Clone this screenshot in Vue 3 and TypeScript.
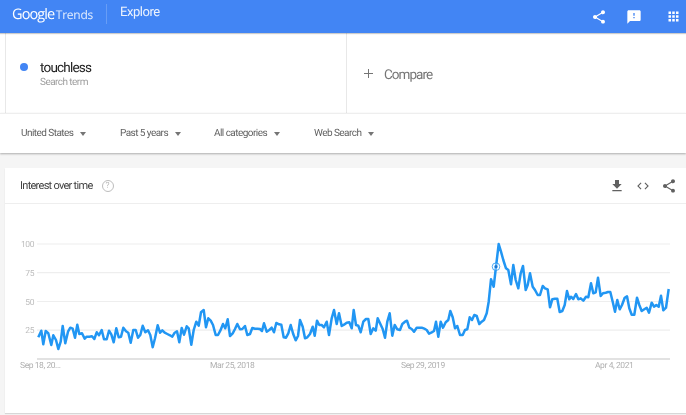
<script setup lang="ts">
import { computed } from 'vue'

const filters = ['United States', 'Past 5 years', 'All categories', 'Web Search']

// weekly samples, read off in three runs: [origin x, origin y, x/y pairs at 3x]
const runs: [number, number, number[]][] = [
  [0, 160, [115,532,124,512,130,553,137,513,145,520,154,555,160,526,168,540,175,567,182,545,188,498,196,550,204,515,211,503,218,506,225,533,232,494,238,522,246,520,254,536,260,530,268,530,276,529,283,537,290,517,297,526,305,510,312,538,320,538,327,512,334,523,341,547,349,505,356,532,363,530,370,503,378,514,385,518,392,548,400,510,407,510,414,533,421,525,428,497,436,517,444,511,451,525,458,562,465,535,473,496,480,518,487,511,494,518,502,522,510,526,517,530,524,518,531,514,538,547,545,504,552,524,560,499,566,505,574,554,581,510,589,485,596,497,603,457,611,450,618,502,625,475,632,482,639,495,647,525,654,525,661,512,669,492,676,505,683,478]],
  [230, 230, [0,318,8,310,15,297,22,282,30,298,37,297,45,288,52,315,60,312,67,294,75,296,82,296,90,297,96,303,102,280,110,305,118,300,125,293,132,307,139,279,147,283,154,284,161,322,168,323,175,310,182,285,190,313,197,331,204,318,210,270,218,290,225,325,232,322,240,312,248,290,254,317,261,272,268,285,275,285,282,292,290,275,297,315,305,265,312,240,320,282,327,250,335,288,342,284,350,278,358,277,365,295,371,240,378,285,385,287,392,307,400,275,408,267,415,267,422,312,430,295,437,302,443,265,450,280,458,297,465,323,472,275,479,250,487,317,494,285,502,298,510,300,517,282,525,275,531,272,538,293,545,297,552,305,560,293,568,293,575,293,583,296,590,300,597,311,605,307,612,303,618,275,625,320,632,275,639,293,647,277,655,270,661,243,668,262,675,295,682,288]],
  [456, 230, [12,315,20,315,27,300,34,298,41,262,48,270,55,255,62,258,70,282,77,275,84,270,92,250,98,215,105,148,113,170,120,110,128,42,135,65,142,90,150,115,157,120,165,163,172,105,179,150,187,175,194,130,201,108,209,180,215,165,222,130,230,170,237,180,245,195,252,195,260,168,267,175,275,178,282,232,289,208,297,206,304,206,311,246,319,243,326,225,333,183,340,208,345,200,352,207,360,192,367,208,374,205,382,212,390,200,397,202,405,160,412,190,419,187,426,143,434,198,441,190,449,188,456,186,463,186,470,215,477,245,484,210,491,238,498,225,506,203,513,199,520,235,527,254,535,254,543,203,550,225,557,243,565,238,572,233,579,248,587,218,594,230,601,225,608,230,615,197,622,241,630,233,638,177]]
]

const linePoints = computed(() => {
  const out: string[] = []
  for (const [ox, oy, pts] of runs) {
    for (let i = 0; i < pts.length; i += 2) {
      out.push(`${(ox + pts[i] / 3).toFixed(1)},${(oy + pts[i + 1] / 3).toFixed(1)}`)
    }
  }
  return out.join(' ')
})

const grid = [
  { y: 244, label: '100' },
  { y: 272.7, label: '75' },
  { y: 301.5, label: '50' },
  { y: 330.2, label: '25' }
]

const dates = [
  { x: 20, label: 'Sep 18, 20...' },
  { x: 210, label: 'Mar 25, 2018' },
  { x: 401, label: 'Sep 29, 2019' },
  { x: 595, label: 'Apr 4, 2021' }
]

const sharePath = 'M18 16.08c-.76 0-1.44.3-1.96.77L8.91 12.7c.05-.23.09-.46.09-.7s-.04-.47-.09-.7l7.05-4.11c.54.5 1.25.81 2.04.81 1.66 0 3-1.34 3-3s-1.34-3-3-3-3 1.34-3 3c0 .24.04.47.09.7L8.04 9.81C7.5 9.31 6.79 9 6 9c-1.66 0-3 1.34-3 3s1.34 3 3 3c.79 0 1.5-.31 2.04-.81l7.12 4.16c-.05.21-.08.43-.08.65 0 1.61 1.31 2.92 2.92 2.92s2.92-1.31 2.92-2.92-1.31-2.92-2.92-2.92z'
</script>

<template>
  <div class="page">
    <header class="topbar">
      <div class="logo"><span class="logo-g">Google</span><span class="logo-t">Trends</span></div>
      <div class="divider"></div>
      <div class="explore">Explore</div>
      <div class="top-icons">
        <svg class="ic-share" viewBox="0 0 24 24"><path :d="sharePath" /></svg>
        <svg class="ic-feedback" viewBox="0 0 24 24"><path d="M20 2H4c-1.1 0-1.99.9-1.99 2L2 22l4-4h14c1.1 0 2-.9 2-2V4c0-1.1-.9-2-2-2zm-7 12h-2v-2h2v2zm0-4h-2V6h2v4z" /></svg>
        <svg class="ic-apps" viewBox="0 0 24 24"><path d="M4 8h4V4H4v4zm6 12h4v-4h-4v4zm-6 0h4v-4H4v4zm0-6h4v-4H4v4zm6 0h4v-4h-4v4zm6-10v4h4V4h-4zm-6 4h4V4h-4v4zm6 6h4v-4h-4v4zm0 6h4v-4h-4v4z" /></svg>
      </div>
    </header>

    <section class="terms">
      <div class="term">
        <span class="dot"></span>
        <div>
          <div class="term-name">touchless</div>
          <div class="term-sub">Search term</div>
        </div>
      </div>
      <div class="compare">
        <svg class="plus" viewBox="0 0 9 9"><path d="M4.5 0v9M0 4.5h9" /></svg>
        <span class="compare-label">Compare</span>
      </div>
    </section>

    <nav class="filters">
      <div v-for="f in filters" :key="f" class="filter">
        <span>{{ f }}</span>
        <i class="caret"></i>
      </div>
    </nav>

    <main class="content">
      <div class="card">
        <div class="card-head">
          <span class="card-title">Interest over time</span>
          <span class="help">?</span>
          <div class="card-icons">
            <svg class="ic-download" viewBox="0 0 24 24"><path d="M19 9h-4V3H9v6H5l7 7 7-7zM5 18v2h14v-2H5z" /></svg>
            <svg class="ic-code" viewBox="0 0 24 24"><path d="M9.4 16.6L4.8 12l4.6-4.6L8 6l-6 6 6 6 1.4-1.4zm5.2 0l4.6-4.6-4.6-4.6L16 6l6 6-6 6-1.4-1.4z" /></svg>
            <svg class="ic-share2" viewBox="0 0 24 24"><path :d="sharePath" /></svg>
          </div>
        </div>
        <svg class="chart" viewBox="5 204 681 208">
          <g v-for="g in grid" :key="g.label">
            <line x1="37" x2="670" :y1="g.y" :y2="g.y" class="gridline" />
            <text x="34" :y="g.y + 3" text-anchor="end" class="axis">{{ g.label }}</text>
          </g>
          <line x1="37" x2="670" y1="359" y2="359" class="baseline" />
          <text v-for="d in dates" :key="d.label" :x="d.x" y="368" class="axis date">{{ d.label }}</text>
          <polyline :points="linePoints" class="trend" />
          <circle cx="496" cy="266.7" r="3.8" class="marker-ring" />
          <circle cx="496" cy="266.7" r="1.6" class="marker-dot" />
        </svg>
      </div>
    </main>
  </div>
</template>

<style>
html, body {
  margin: 0;
  overflow: hidden;
}
</style>

<style scoped>
.page {
  width: 686px;
  height: 415px;
  overflow: hidden;
  background: #f5f5f5;
  font-family: Roboto, "Liberation Sans", sans-serif;
  text-rendering: geometricPrecision;
  filter: blur(0.45px);
}

.topbar {
  height: 33px;
  background: #4285f4;
  display: flex;
  align-items: center;
  color: #fff;
  box-shadow: 0 1px 1px rgba(0, 0, 0, 0.2);
  position: relative;
}
.logo {
  margin-left: 12px;
  width: 80px;
  display: flex;
  align-items: baseline;
  gap: 1.5px;
  margin-top: -4px;
}
.logo-g {
  font-family: "Open Sans", sans-serif;
  font-size: 14.5px;
  letter-spacing: -0.9px;
}
.logo-t {
  font-family: "Open Sans", sans-serif;
  font-size: 12px;
  letter-spacing: -0.25px;
  opacity: 0.85;
}
.divider {
  width: 1px;
  height: 20px;
  margin-left: 14px;
  margin-top: -6px;
  background: rgba(255, 255, 255, 0.2);
}
.explore {
  margin-left: 13px;
  margin-bottom: 8px;
  font-size: 13px;
  letter-spacing: -0.45px;
  opacity: 0.9;
}
.top-icons {
  margin-left: auto;
  display: flex;
  align-items: center;
  fill: #fff;
}
.ic-share { width: 16px; height: 16px; margin-right: 19px; }
.ic-feedback { width: 16px; height: 16px; margin-right: 24px; }
.ic-apps { width: 15px; height: 15px; margin-right: 5px; }

.terms {
  height: 80px;
  display: grid;
  grid-template-columns: 341px 1fr;
  margin-left: 5px;
  background: #fff;
  border-left: 1px solid #e8e8e8;
  box-shadow: -5px 0 0 #fff;
}
.term {
  display: flex;
  align-items: center;
  gap: 12px;
  padding-left: 14px;
  padding-top: 2px;
  border-right: 1px solid #e8e8e8;
}
.dot {
  width: 8px;
  height: 8px;
  border-radius: 50%;
  background: #4285f4;
  margin-top: -15px;
}
.term-name {
  font-size: 13.5px;
  letter-spacing: -0.8px;
  color: #212121;
  line-height: 16px;
}
.term-sub {
  font-size: 10px;
  letter-spacing: -0.55px;
  color: #9e9e9e;
  line-height: 13px;
}
.compare {
  display: flex;
  align-items: center;
  gap: 11px;
  padding-left: 17px;
  font-size: 13.5px;
  letter-spacing: -0.95px;
  color: #757575;
}
.compare-label {
  padding-top: 3px;
}
.plus {
  width: 9px;
  height: 9px;
  fill: none;
  stroke: #757575;
  stroke-width: 1;
}

.filters {
  height: 39px;
  border-top: 1px solid #eee;
  background: #fff;
  box-shadow: 0 1px 2px rgba(0, 0, 0, 0.3);
  display: flex;
  align-items: center;
  padding-left: 21px;
  position: relative;
}
.filter {
  display: flex;
  align-items: center;
  font-size: 10px;
  letter-spacing: -0.55px;
  color: #616161;
}
.filter:nth-child(1) { width: 99px; }
.filter:nth-child(2) { width: 94px; }
.filter:nth-child(3) { width: 100px; }
.caret {
  width: 0;
  height: 0;
  margin-left: 7px;
  border-left: 3.5px solid transparent;
  border-right: 3.5px solid transparent;
  border-top: 4px solid #757575;
}

.content {
  padding: 15px 0 0 5px;
}
.card {
  background: #fff;
  height: 245px;
  box-shadow: 0 1px 1px rgba(0, 0, 0, 0.12);
}
.card-head {
  height: 35px;
  display: flex;
  align-items: center;
  padding-left: 15px;
  border-bottom: 1px solid #eee;
}
.card-title {
  font-size: 11px;
  letter-spacing: -0.72px;
  color: #424242;
}
.help {
  width: 10px;
  height: 10px;
  margin-left: 9px;
  border: 1px solid #bdbdbd;
  border-radius: 50%;
  font-size: 8.5px;
  line-height: 10px;
  text-align: center;
  color: #bdbdbd;
}
.card-icons {
  margin-left: auto;
  display: flex;
  align-items: center;
  fill: #616161;
}
.ic-download { width: 16px; height: 16px; margin-right: 11px; }
.ic-code { width: 14px; height: 14px; margin-right: 11px; }
.ic-share2 { width: 16px; height: 16px; margin-right: 9px; }

.chart {
  display: block;
  width: 681px;
  height: 208px;
}
.gridline {
  stroke: #eeeeee;
  stroke-width: 1.2;
}
.baseline {
  stroke: #d9d9d9;
  stroke-width: 1.4;
}
.axis {
  font-size: 8.5px;
  letter-spacing: -0.42px;
  fill: #bdbdbd;
}
.date {
  fill: #b0b0b0;
}
.trend {
  fill: none;
  stroke: #2196f3;
  stroke-width: 2.5;
  stroke-linejoin: round;
}
.marker-ring {
  fill: rgba(255, 255, 255, 0.35);
  stroke: #2196f3;
  stroke-width: 0.8;
}
.marker-dot {
  fill: #1976d2;
}
</style>
